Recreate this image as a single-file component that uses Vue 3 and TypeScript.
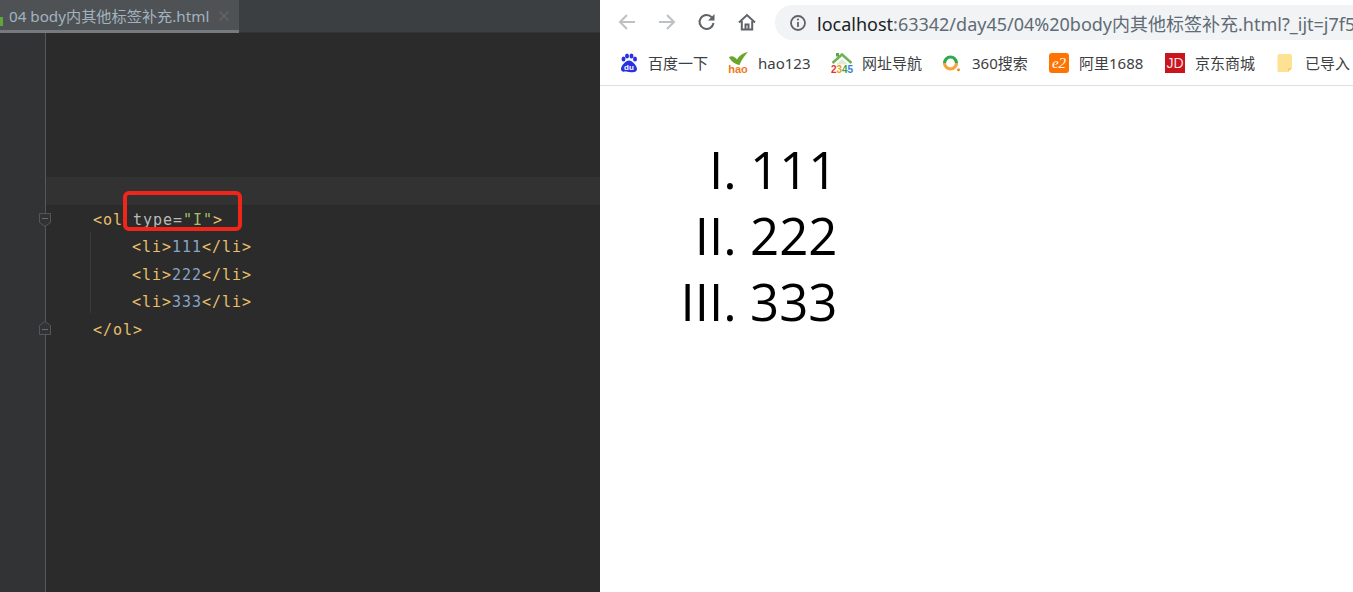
<script setup lang="ts">
interface Mark { label: string; kind: string; width: number }
const marks: Mark[] = [
  { label: '百度一下', kind: 'baidu', width: 110 },
  { label: 'hao123', kind: 'hao', width: 104 },
  { label: '网址导航', kind: 'n2345', width: 110 },
  { label: '360搜索', kind: 'q360', width: 107 },
  { label: '阿里1688', kind: 'ali', width: 116 },
  { label: '京东商城', kind: 'jd', width: 110 },
  { label: '已导入', kind: 'folder', width: 76 },
]
</script>

<template>
  <div class="screen">
    <section class="ide">
      <header class="tabbar">
        <div class="tab">
          <i class="tab-mark"></i>
          <span class="tab-name">04 body内其他标签补充.html</span>
          <svg class="tab-close" width="12" height="12" viewBox="0 0 12 12"><path d="M1.5 1.5l9 9M10.5 1.5l-9 9" stroke="#63686a" stroke-width="1.3" fill="none"/></svg>
        </div>
      </header>
      <div class="editor">
        <div class="gutter">
          <svg class="fold fold-open" width="14" height="16" viewBox="0 0 14 16"><path d="M1.5 1.5h11v9L7 14.5 1.500 10.5z" fill="#313335" stroke="#54575a"/><path d="M4 6.5h6" stroke="#6a6d70"/></svg>
          <svg class="fold fold-close" width="14" height="16" viewBox="0 0 14 16"><path d="M1.5 14.5h11v-9L7 1.5 1.500 5.5z" fill="#313335" stroke="#54575a"/><path d="M4 9.5h6" stroke="#6a6d70"/></svg>
        </div>
        <div class="code">
          <div class="row current"></div>
          <div class="row"><span class="t">&lt;ol</span> <span class="a">type=</span><span class="s">"I"</span><span class="t">&gt;</span></div>
          <div class="row in"><span class="t">&lt;li&gt;</span><span class="n">111</span><span class="t">&lt;/li&gt;</span></div>
          <div class="row in"><span class="t">&lt;li&gt;</span><span class="n">222</span><span class="t">&lt;/li&gt;</span></div>
          <div class="row in"><span class="t">&lt;li&gt;</span><span class="n">333</span><span class="t">&lt;/li&gt;</span></div>
          <div class="row"><span class="t">&lt;/ol&gt;</span></div>
          <i class="guide"></i>
        </div>
        <i class="redbox"></i>
      </div>
    </section>

    <section class="browser">
      <div class="toolbar">
        <svg class="nav" width="20" height="20" viewBox="0 0 20 20"><path d="M18 10H3M10 3l-7 7 7 7" fill="none" stroke="#bdc0c4" stroke-width="2"/></svg>
        <svg class="nav" width="20" height="20" viewBox="0 0 20 20"><path d="M2 10h15M10 3l7 7-7 7" fill="none" stroke="#bdc0c4" stroke-width="2"/></svg>
        <svg class="nav" width="20" height="20" viewBox="0 0 20 20"><path d="M16.5 11a7 7 0 1 1-1.6-5.6" fill="none" stroke="#5f6368" stroke-width="2"/><path d="M17.5 2v6.5H11z" fill="#5f6368"/></svg>
        <svg class="nav" width="20" height="20" viewBox="0 0 20 20"><path d="M2 10.5L10 3l8 7.500M4.800 9v8.500h10.400V9M8.500 17v-4.500h3V17" fill="none" stroke="#5f6368" stroke-width="2"/></svg>
        <div class="omnibox">
          <svg class="info" width="18" height="18" viewBox="0 0 18 18"><circle cx="9" cy="9" r="7" fill="none" stroke="#5f6368" stroke-width="1.800"/><path d="M9 8v5" stroke="#5f6368" stroke-width="1.800"/><circle cx="9" cy="5.500" r="1.100" fill="#5f6368"/></svg>
          <span class="url"><b>localhost</b>:63342/day45/04%20body内其他标签补充.html?_ijt=j7f5</span>
        </div>
      </div>
      <nav class="bookmarks">
        <div v-for="m in marks" :key="m.label" class="mark" :style="{ width: m.width + 'px' }">
          <span class="mark-icon">
            <svg v-if="m.kind === 'baidu'" class="paw" width="20" height="20" viewBox="0 0 20 20" fill="#2932e1"><ellipse cx="4.500" cy="6" rx="2" ry="2.600"/><ellipse cx="8" cy="3" rx="2" ry="2.600"/><ellipse cx="12.500" cy="3" rx="2" ry="2.600"/><ellipse cx="16" cy="6" rx="2" ry="2.600"/><path d="M10 7.500c3 0 8 5 8 8.500 0 3.500-3.500 3.500-8 3s-8 .5-8-3c0-3.500 5-8.500 8-8.500z"/><text x="10" y="17" text-anchor="middle" fill="#fff" font-size="8" font-weight="700" font-family="Liberation Sans, sans-serif">du</text></svg>
            <span v-else-if="m.kind === 'hao'" class="hao">
              <svg width="20" height="13" viewBox="0 0 20 13"><path d="M1 5c3-1.500 5-1 8 2.500C11 4 14 1.500 20 0c-3 3-6 7-8.500 13C8 12.500 3 10 1 5z" fill="#6aa62c"/></svg>
              <em>hao</em>
            </span>
            <span v-else-if="m.kind === 'n2345'" class="n2345">
              <svg width="22" height="14" viewBox="0 0 22 14"><path d="M1.500 11L11 2.500 20.500 11" fill="none" stroke="#6fb257" stroke-width="2.500"/><path d="M5 12.500L11 7l6 5.500z" fill="#dcebd2"/><path d="M5 1h3v3.500H5z" fill="#5aa846"/></svg>
              <em><u class="r">2</u><u class="o">3</u><u class="g">4</u><u class="b">5</u></em>
            </span>
            <svg v-else-if="m.kind === 'q360'" class="ring" width="20" height="20" viewBox="0 0 20 20"><path d="M3.500 10a6 6 0 0 1 12 0" fill="none" stroke="#2fa84f" stroke-width="3.200"/><path d="M15.500 10a6 6 0 0 1-12 0" fill="none" stroke="#f5a63a" stroke-width="3.200"/><circle cx="17.500" cy="16.800" r="1.500" fill="#f08a1d"/></svg>
            <span v-else-if="m.kind === 'ali'" class="ali">e2</span>
            <span v-else-if="m.kind === 'jd'" class="jd">JD</span>
            <svg v-else class="leaf" width="16" height="20" viewBox="0 0 16 20"><path d="M2 1h11a2 2 0 0 1 2 2v12l-4 4H2a1.500 1.500 0 0 1-1.500-1.500v-15A1.500 1.500 0 0 1 2 1z" fill="#fde293"/><path d="M15 15h-3a1 1 0 0 0-1 1v3z" fill="#f6ce6a"/></svg>
          </span>
          <span class="mark-label">{{ m.label }}</span>
        </div>
      </nav>
      <main class="page">
        <ol type="I">
          <li>111</li>
          <li>222</li>
          <li>333</li>
        </ol>
      </main>
    </section>
  </div>
</template>

<style>
html, body { margin: 0; overflow: hidden; }
</style>

<style scoped>
.screen { display: flex; width: 1353px; height: 592px; overflow: hidden; font-family: "Noto Sans", "Noto Sans CJK SC", sans-serif; }
.ide { width: 600px; flex: none; display: flex; flex-direction: column; background: #2b2b2b; }
.tabbar { height: 33px; flex: none; background: #3c3f41; box-sizing: border-box; border-bottom: 1px solid #323232; }
.tab { position: relative; width: 239px; height: 33px; box-sizing: border-box; background: #4e5254; border-bottom: 3px solid #747a80; display: flex; align-items: center; padding: 1px 0 0 9px; }
.tab-mark { position: absolute; left: 0; top: 17px; width: 3px; height: 9px; background: #5ea83a; }
.tab-name { color: #a3b3c0; font-size: 15.200px; line-height: 20px; white-space: nowrap; width: 209px; }
.tab-close { flex: none; }
.editor { position: relative; flex: 1; display: flex; }
.gutter { position: relative; width: 45px; flex: none; background: #313335; border-right: 1px solid #555759; }
.fold { position: absolute; left: 38px; }
.fold-open { top: 179px; }
.fold-close { top: 287px; }
.code { position: relative; flex: 1; padding-top: 144px; font-family: "DejaVu Sans Mono", monospace; font-size: 15px; letter-spacing: 0.97px; }
.row { height: 27.5px; line-height: 31px; padding-left: 47px; white-space: pre; color: #a9b7c6; }
.row.in { padding-left: 86px; }
.row.current { background: #323232; }
.t { color: #e8bf6a; }
.a { color: #bababa; }
.s { color: #a5c261; }
.n { color: #86a5c8; }
.guide { position: absolute; left: 44px; top: 199px; width: 1px; height: 81px; background: #3b3b3b; }
.redbox { position: absolute; left: 123px; top: 158px; width: 119px; height: 40px; box-sizing: border-box; border: 4px solid #f0261b; border-radius: 6px; }

.browser { flex: 1; display: flex; flex-direction: column; background: #fff; min-width: 0; }
.toolbar { height: 40px; flex: none; display: flex; align-items: center; padding: 5px 0 0 17px; box-sizing: border-box; }
.nav { margin: -2px 20px 0 0; flex: none; }
.omnibox { flex: 1; min-width: 0; height: 35px; margin-left: -2px; background: #f1f3f4; border-radius: 18px 0 0 18px; display: flex; align-items: center; padding-left: 14px; overflow: hidden; }
.info { flex: none; margin-right: 10px; }
.url { font-size: 18px; color: #5f6b76; white-space: nowrap; }
.url b { font-weight: 400; color: #202124; }
.bookmarks { height: 45px; flex: none; display: flex; align-items: center; padding-left: 18px; border-bottom: 1px solid #dedede; overflow: hidden; }
.mark { display: flex; align-items: center; flex: none; }
.mark-icon { width: 30px; flex: none; display: flex; align-items: center; }
.paw { margin-left: 1px; }
.leaf { margin-left: 2px; }
.ring { margin-left: -1px; }
.mark-label { font-size: 15px; color: #3c4043; white-space: nowrap; }
.hao { display: flex; flex-direction: column; align-items: center; width: 20px; line-height: 8px; }
.hao em { font: 700 11px/8px "Liberation Sans", sans-serif; color: #f07a1c; }
.n2345 { display: flex; flex-direction: column; align-items: center; width: 22px; line-height: 8px; margin-left: -1px; }
.n2345 em { font: 700 10px/8px "Liberation Sans", sans-serif; font-style: normal; }
.n2345 u { text-decoration: none; }
.r { color: #e0352b; } .o { color: #e8a020; } .g { color: #3fa34d; } .b { color: #3a7fd5; }
.ali { width: 20px; height: 20px; border-radius: 3px; background: #ff7300; color: #fff; font: italic 400 15px/20px "Liberation Serif", serif; text-align: center; }
.jd { width: 20px; height: 20px; background: #c9151e; color: #f6dfe0; font: 400 14px/20px "Liberation Sans", sans-serif; text-align: center; }
.page { flex: 1; }
ol { margin: 50px 0 0; padding-left: 150px; font-family: "Open Sans", sans-serif; font-size: 51px; line-height: 66px; color: #000; }
</style>
